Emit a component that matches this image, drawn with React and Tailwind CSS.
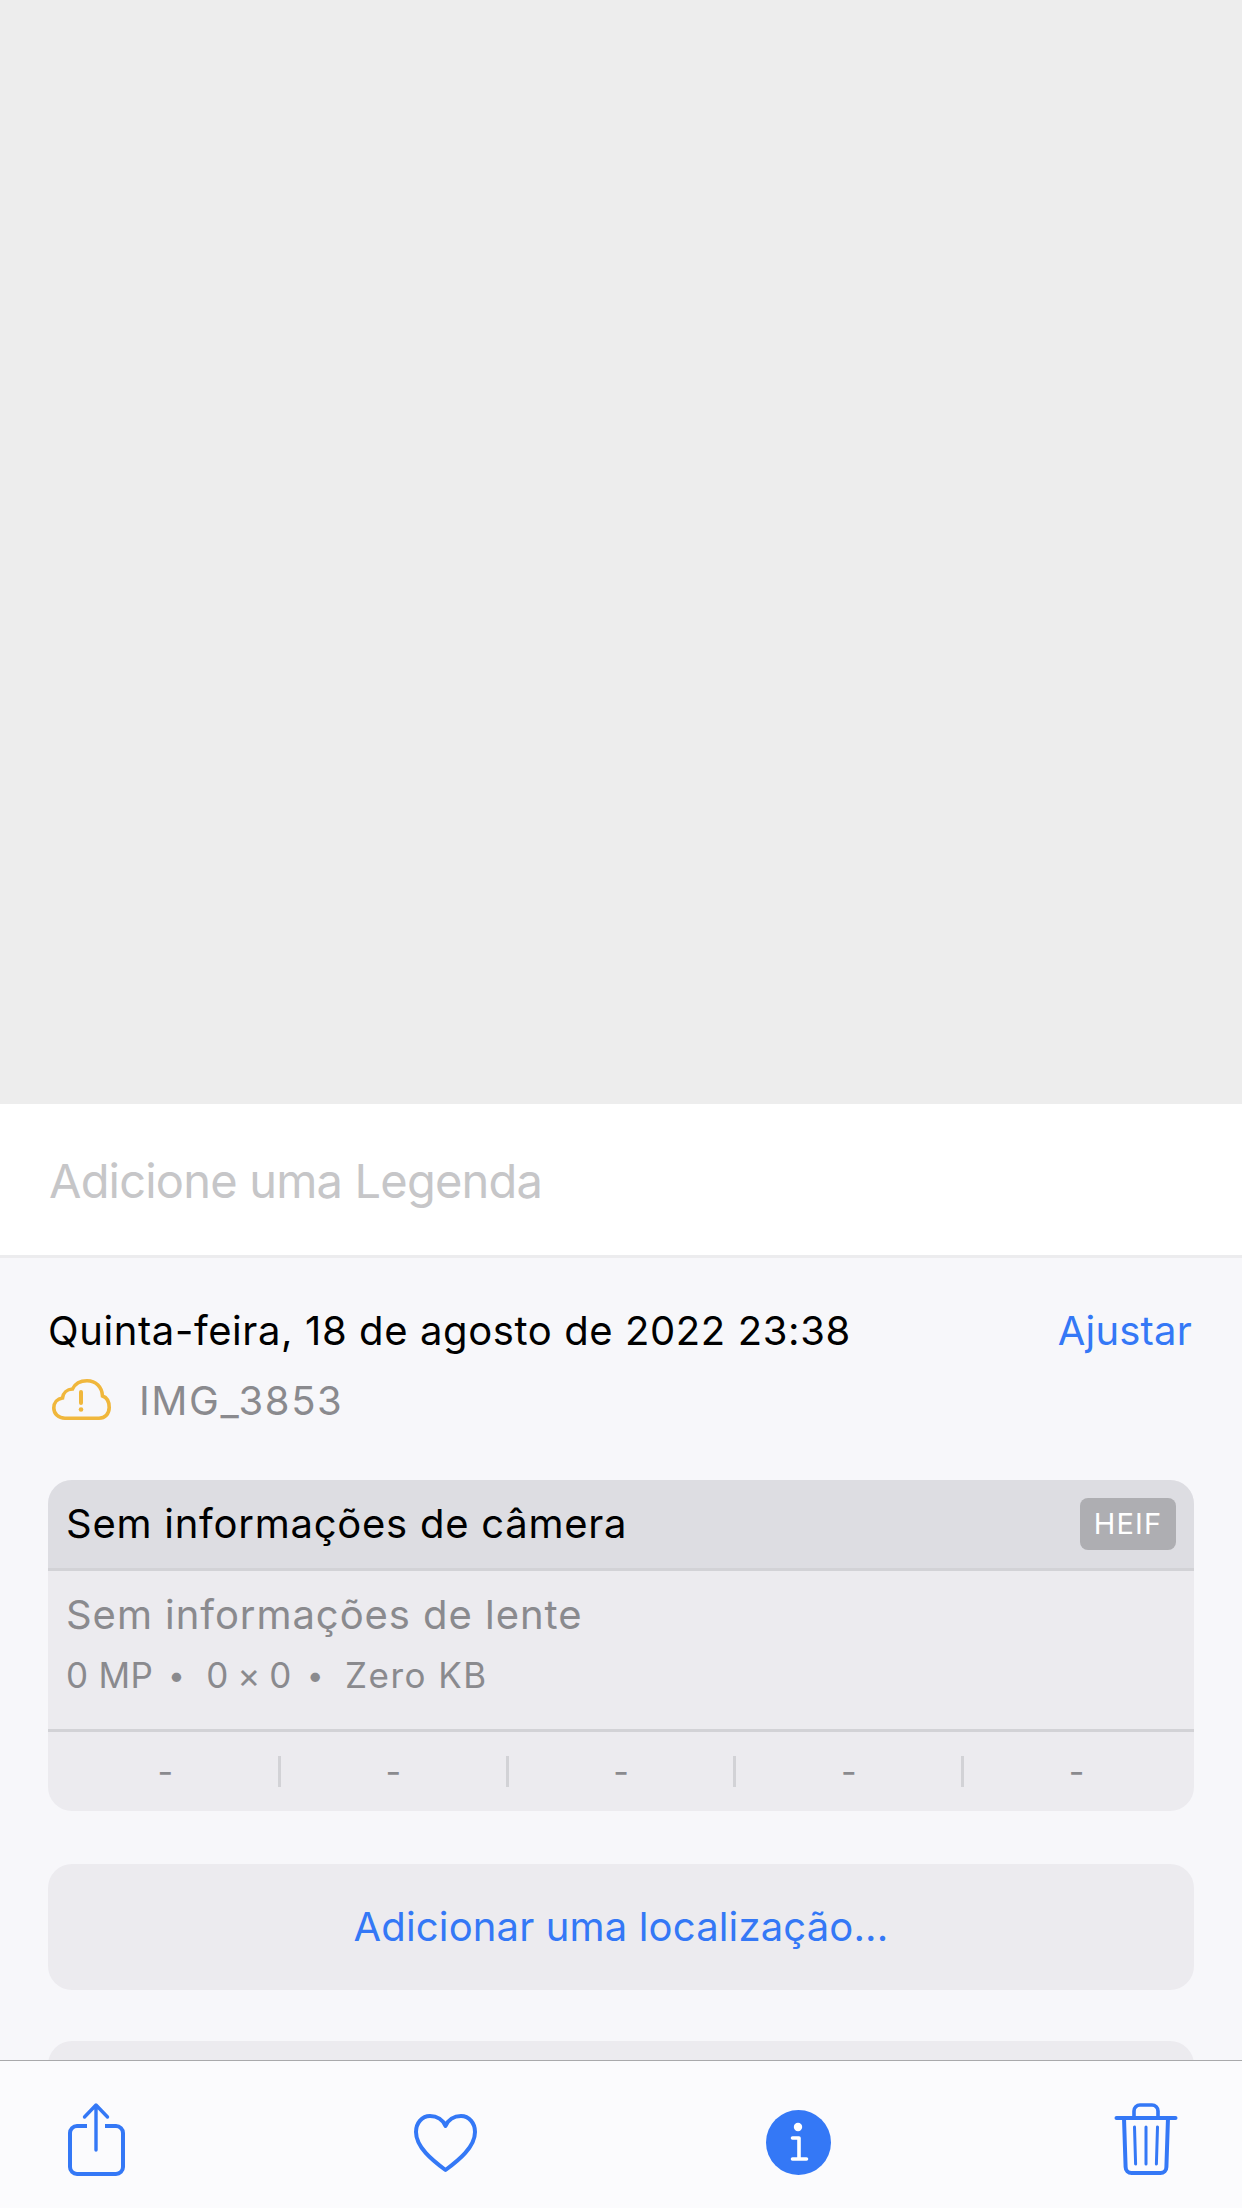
import React from 'react';

const font = { fontFamily: 'Inter, "Liberation Sans", sans-serif' };

function CloudIcon() {
  return (
    <svg width="64" height="46" viewBox="0 0 64 46" fill="none" stroke="#f0b73c" strokeWidth="3.6" strokeLinecap="round">
      <path d="M15 41.2C8.5 41.2 3.8 36.8 3.8 31C3.8 25.5 7.5 21.7 12.5 21C13 16 17 12.3 22.5 12C25 7 30.5 3.8 37 3.8C46 3.8 52 10 52.5 19C57 20.5 59.2 25 59.2 30.5C59.2 36.8 55 41.2 49 41.2Z" />
      <path d="M31 15V26" strokeWidth="4" />
      <circle cx="31" cy="32.5" r="2.3" fill="#f0b73c" stroke="none" />
    </svg>
  );
}

function ShareIcon() {
  return (
    <svg width="61" height="80" viewBox="0 0 61 80" fill="none" stroke="#3478f6" strokeWidth="4" strokeLinecap="butt">
      <path d="M21 26H11a7 7 0 0 0-7 7V67a7 7 0 0 0 7 7H50a7 7 0 0 0 7-7V33a7 7 0 0 0-7-7H39" />
      <path d="M30 50V6M18.5 17L30 5L41.5 17" strokeWidth="3.4" strokeLinecap="round" strokeLinejoin="round" />
    </svg>
  );
}

function HeartIcon() {
  return (
    <svg width="67" height="80" viewBox="0 0 67 80" fill="none" stroke="#3478f6" strokeWidth="4" strokeLinejoin="round">
      <path d="M33.5 70C20 60 4 47 4 32C4 23 10 16 18 16C25 16 31 20 33.5 26C36 20 42 16 49 16C57 16 63 23 63 32C63 47 47 60 33.5 70Z" />
    </svg>
  );
}

function InfoIcon() {
  return (
    <svg width="65" height="80" viewBox="0 0 65 80" fill="none">
      <circle cx="32.5" cy="42.5" r="32.5" fill="#3478f6" />
      <circle cx="32" cy="27" r="4.2" fill="#fff" />
      <path d="M26.5 38H33V59M26.5 59H40.5" stroke="#fff" strokeWidth="3.6" strokeLinecap="round" strokeLinejoin="round" />
    </svg>
  );
}

function TrashIcon() {
  return (
    <svg width="66" height="80" viewBox="0 0 66 80" fill="none" stroke="#3478f6" strokeWidth="4" strokeLinecap="round">
      <path d="M3.5 18H62.5" />
      <path d="M21 18V11a6 6 0 0 1 6-6H39a6 6 0 0 1 6 6V18" strokeWidth="3.6" />
      <path d="M11 18L12.6 67a6 6 0 0 0 6 6H47.4a6 6 0 0 0 6-6L55 18" />
      <path d="M21.5 27L22.6 64M33 27V64M44.5 27L43.4 64" strokeWidth="3" />
    </svg>
  );
}

export default function App() {
  return (
    <div className="flex h-[2208px] w-[1242px] flex-col overflow-hidden bg-[#f7f7fa]" style={font}>
      <div className="h-[1104px] shrink-0 bg-[#ededed]" />

      <div className="flex h-[154px] shrink-0 items-center border-b-[3px] border-[#ececee] bg-white pt-[3px] pl-[49px] text-[47px] leading-[50px] tracking-[-0.8px] text-[#c6c6c8]">
        Adicione uma Legenda
      </div>

      <div className="min-h-0 flex-1 overflow-hidden px-[48px] pt-[48px]">
        <div className="flex h-[50px] items-center justify-between pr-[2px] text-[40px] leading-[50px]">
          <span className="tracking-[0.6px] text-black">Quinta-feira, 18 de agosto de 2022 23:38</span>
          <span className="tracking-[0.2px] text-[#3478f6]">Ajustar</span>
        </div>
        <div className="mt-[20px] flex h-[50px] items-center pl-[2px]">
          <div className="-translate-y-[1px]"><CloudIcon /></div>
          <span className="ml-[25px] text-[40px] leading-[50px] tracking-[1.6px] text-[#8a8a8e]">IMG_3853</span>
        </div>

        <div className="mt-[54px] overflow-hidden rounded-[24px] bg-[#ecebef]">
          <div className="flex h-[91px] items-center justify-between border-b-[3px] border-[#d2d2d6] bg-[#dddde2] pl-[18px] pr-[18px]">
            <span className="text-[40px] leading-[50px] tracking-[0.75px] text-black">Sem informações de câmera</span>
            <span className="flex h-[52px] w-[96px] items-center justify-center rounded-[8px] bg-[#aeaeb2] text-[29px] tracking-[1.2px] text-white">
              HEIF
            </span>
          </div>
          <div className="h-[161px] border-b-[3px] border-[#d2d2d6] pl-[18px] pt-[19px] text-[#8a8a8e]">
            <div className="text-[40px] leading-[50px] tracking-[0.95px]">Sem informações de lente</div>
            <div className="mt-[13px] flex items-center text-[35px] leading-[44px] tracking-[0.3px]">
              <span>0 MP</span>
              <span className="ml-[15px] mr-[21px] text-[30px]">•</span>
              <span className="tracking-[-0.5px]">0 × 0</span>
              <span className="ml-[16px] mr-[21px] text-[30px]">•</span>
              <span className="tracking-[1.5px]">Zero KB</span>
            </div>
          </div>
          <div className="flex h-[79px] items-start px-[5px] pt-[24px] text-[#8a8a8e]">
            {[0, 1, 2, 3, 4].map((i) => (
              <div
                key={i}
                className={`flex h-[31px] flex-1 items-center justify-center text-[34px] leading-[31px] ${i < 4 ? 'border-r-[3px] border-[#d2d2d6]' : ''}`}
              >
                -
              </div>
            ))}
          </div>
        </div>

        <div className="mt-[53px] flex h-[126px] items-center justify-center rounded-[24px] bg-[#ecebef] text-[40px] tracking-[0.15px] text-[#3478f6]">
          Adicionar uma localização...
        </div>

        <div className="mt-[51px] h-[200px] rounded-[24px] bg-[#ecebef]" />
      </div>

      <div className="flex h-[148px] shrink-0 items-start border-t border-[#a9a9ab] bg-[#fbfbfd] pl-[66px] pt-[39px]">
        <ShareIcon />
        <div className="ml-[285px]"><HeartIcon /></div>
        <div className="ml-[287px]"><InfoIcon /></div>
        <div className="ml-[282px]"><TrashIcon /></div>
      </div>
    </div>
  );
}
